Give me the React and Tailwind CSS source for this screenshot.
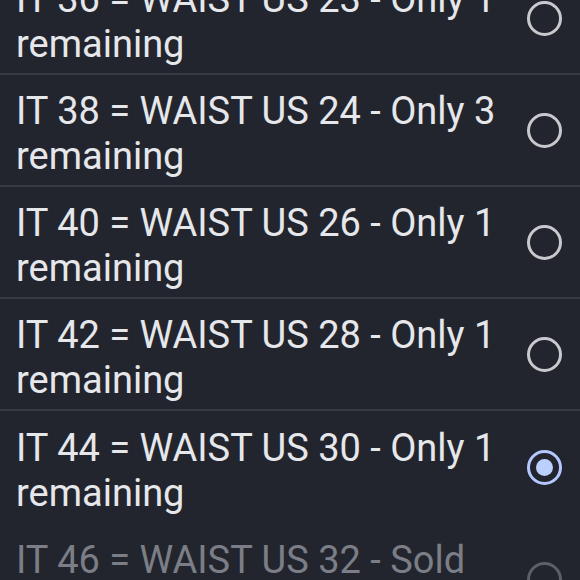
const sizes = [
  { label: "IT 36 = WAIST US 23 - Only 1 remaining", state: "idle" },
  { label: "IT 38 = WAIST US 24 - Only 3 remaining", state: "idle" },
  { label: "IT 40 = WAIST US 26 - Only 1 remaining", state: "idle" },
  { label: "IT 42 = WAIST US 28 - Only 1 remaining", state: "idle" },
  { label: "IT 44 = WAIST US 30 - Only 1 remaining", state: "selected", last: true },
  { label: "IT 46 = WAIST US 32 - Sold out", state: "disabled" },
];

const Radio = ({ state }) => {
  if (state === "selected") {
    return (
      <div className="flex h-[35px] w-[35px] shrink-0 items-center justify-center rounded-full border-[3.5px] border-[#b4c7ff]">
        <div className="h-[17px] w-[17px] rounded-full bg-[#bcd0ff]" />
      </div>
    );
  }
  return (
    <div
      className={`h-[35px] w-[35px] shrink-0 rounded-full border-[3.5px] ${
        state === "disabled" ? "border-[#5c5f66]" : "border-[#c9c9cd]"
      }`}
    />
  );
};

const SizeRow = ({ size }) => (
  <div
    className={`flex h-[112px] items-center justify-between pl-[16px] pr-[18px] ${
      size.last || size.state === "disabled" ? "" : "border-b-2 border-[#373a42]"
    }`}
  >
    <p
      className={`w-[490px] pt-[7px] text-[38px] leading-[45px] ${
        size.state === "disabled" ? "text-[#7b7e86]" : "text-[#e6e7eb]"
      }`}
    >
      {size.label}
    </p>
    <Radio state={size.state} />
  </div>
);

export default function App() {
  return (
    <div
      className="h-[580px] w-[580px] overflow-hidden bg-[#22252d]"
      style={{ fontFamily: "Roboto, 'Noto Sans', sans-serif" }}
    >
      <div className="-mt-[37px] flex flex-col">
        {sizes.map((size) => (
          <SizeRow key={size.label} size={size} />
        ))}
      </div>
    </div>
  );
}
